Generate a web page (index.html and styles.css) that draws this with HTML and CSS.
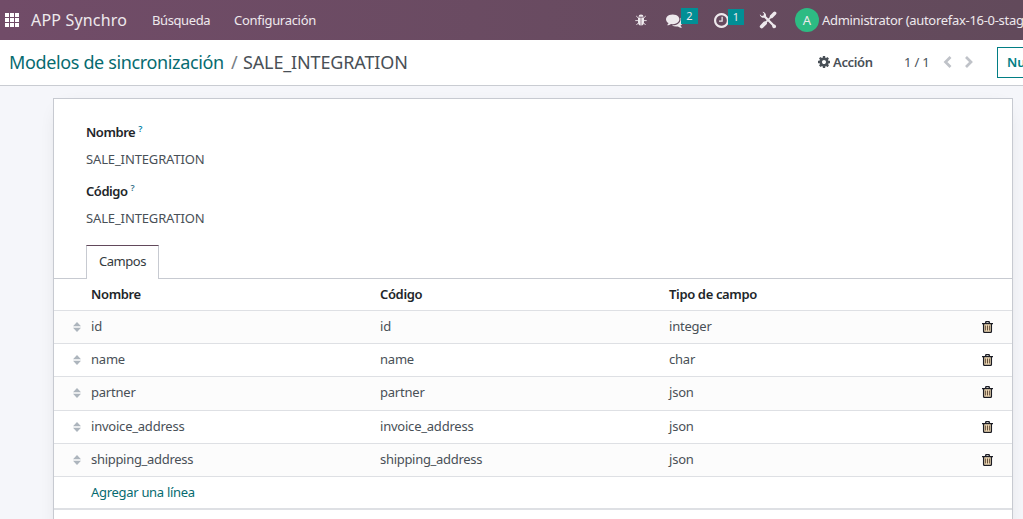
FILE: index.html
```html
<!DOCTYPE html>
<html lang="es">
<head>
<meta charset="utf-8">
<title>SALE_INTEGRATION</title>
<link rel="stylesheet" href="styles.css">
</head>
<body>
<svg class="defs" width="0" height="0">
  <symbol id="sort" viewBox="0 0 8 10"><path d="M4 0 8 4.200H0zM0 5.800H8L4 10z"/></symbol>
  <symbol id="trash" viewBox="0 0 11 12"><path fill="#f5dfb8" d="M2 3h7v8H2z"/><path fill="none" stroke="#1b1c24" stroke-width="1.300" d="M0 2.600H11M3.400 2.500 4 .7H7L7.600 2.500M1.600 2.600V10.500Q1.600 11.400 2.500 11.400H8.500Q9.400 11.400 9.400 10.500V2.600"/><path d="M3.600 4.500V9.500M5.500 4.500V9.500M7.400 4.500V9.500" stroke="#66513f" stroke-width="1"/></symbol>
</svg>
<header class="navbar">
  <svg class="apps" viewBox="0 0 14 14"><path d="M0 0h4v4H0zM5 0h4v4H5zM10 0h4v4h-4zM0 5h4v4H0zM5 5h4v4H5zM10 5h4v4h-4zM0 10h4v4H0zM5 10h4v4H5zM10 10h4v4h-4z"/></svg>
  <span class="brand">APP Synchro</span>
  <span class="menu search">Búsqueda</span>
  <span class="menu config">Configuración</span>
  <div class="systray">
    <svg class="bug" viewBox="0 0 12 12"><path d="M3.500 2.800a2.500 2.400 0 0 1 5 0zM3 3.500h2.700v8Q3 11.200 3 8zM6.300 3.500H9V8q0 3.200-2.700 3.500z"/><path fill="none" stroke="currentColor" stroke-width=".9" d="M1.200 2 3.300 4M10.800 2 8.700 4M.3 6.600H3M11.700 6.600H9M1.400 11 3.300 9M10.600 11 8.700 9"/></svg>
    <span class="tray-item messages"><svg viewBox="0 0 1792 1792"><path d="M1408 768q0 139-94 257t-256.500 186.500-353.500 68.500q-86 0-176-16-124 88-278 128-36 9-86 16h-3q-11 0-20.500-8t-11.500-21q-1-3-1-6.500t.5-6.500 2-6l2.500-5 3.500-5.500 4-5 4.500-5 4-4.500q5-6 23-25t26-29.500 22.500-29 25-38.500 20.500-44q-124-72-195-177t-71-224q0-139 94-257t256.500-186.500 353.500-68.500 353.500 68.500 256.500 186.500 94 257zm384 256q0 120-71 224.500t-195 176.500q10 24 20.500 44t25 38.500 22.500 29 26 29.500 23 25q1 1 4 4.500t4.500 5 4 5 3.500 5.500l2.500 5 2 6 .5 6.500-1 6.500q-3 14-13 22t-22 7q-50-7-86-16-154-40-278-128-90 16-176 16-271 0-472-132 58 4 88 4 161 0 309-45t264-129q125-92 192-212t67-254q0-77-23-152 129 71 204 178t75 230z"/></svg><b class="badge">2</b></span>
    <span class="tray-item activities"><svg viewBox="128 128 1536 1536"><path d="M1024 544v448q0 14-9 23t-23 9h-320q-14 0-23-9t-9-23v-64q0-14 9-23t23-9h224v-352q0-14 9-23t23-9h64q14 0 23 9t9 23zm416 352q0-148-73-273t-198-198-273-73-273 73-198 198-73 273 73 273 198 198 273 73 273-73 198-198 73-273zm224 0q0 209-103 385.500t-279.500 279.500-385.500 103-385.500-103-279.500-279.500-103-385.500 103-385.500 279.500-279.500 385.500-103 385.500 103 279.500 279.500 103 385.500z"/></svg><b class="badge">1</b></span>
    <svg class="tools" viewBox="0 0 18 18"><path d="M.8 3.200A3.800 3.800 0 0 0 5.300 6.800L13 14.600Q13 16.700 14.600 17.200 16 17.400 17 16.200 17.600 14 14.900 13.300L7 5.300A3.800 3.800 0 0 0 3.300.8L5 2.500 4.600 4.400 2.700 4.900z"/><path fill="none" stroke="currentColor" stroke-linecap="round" d="M2.700 15.500 6 12.200" stroke-width="3.800"/><path fill="none" stroke="currentColor" d="M6 12.200 12 6" stroke-width="1.700"/><path fill="none" stroke="currentColor" stroke-linecap="round" d="M12.500 5.500 15.700 2.200" stroke-width="3.400"/></svg>
    <span class="avatar">A</span>
    <span class="user">Administrator (autorefax-16-0-staging)</span>
  </div>
</header>
<section class="control">
  <div class="crumbs"><a>Modelos de sincronización</a><i>/</i><span>SALE_INTEGRATION</span></div>
  <div class="action"><svg viewBox="128 128 1536 1536"><path d="M1152 896q0-106-75-181t-181-75-181 75-75 181 75 181 181 75 181-75 75-181zm512-109v222q0 12-8 23t-20 13l-185 28q-19 54-39 91 35 50 107 138 10 12 10 25t-9 23q-27 37-99 108t-94 71q-12 0-26-9l-138-108q-44 23-91 38-16 136-29 186-7 28-36 28h-222q-14 0-24.500-8.500t-11.500-21.500l-28-184q-49-16-90-37l-141 107q-10 9-25 9-14 0-25-11-126-114-165-168-7-10-7-23 0-12 8-23 15-21 51-66.500t54-70.500q-27-50-41-99l-183-27q-13-2-21-12.500t-8-23.500v-222q0-12 8-23t19-13l186-28q14-46 39-92-40-57-107-138-10-12-10-24 0-10 9-23 26-36 98.500-107.500t94.500-71.500q13 0 26 10l138 107q44-23 91-38 16-136 29-186 7-28 36-28h222q14 0 24.500 8.500t11.500 21.500l28 184q49 16 90 37l142-107q9-9 24-9 13 0 25 10 129 119 165 170 7 8 7 22 0 12-8 23-15 21-51 66.500t-54 70.500q26 50 41 98l183 28q13 2 21 12.500t8 23.500z"/></svg><b>Acción</b></div>
  <span class="pager">1 / 1</span>
  <svg class="arrows" viewBox="0 0 30 12"><path d="M7.500 1 2.500 6l5 5M23 1l5 5-5 5"/></svg>
  <button class="new">Nuevo</button>
</section>
<main class="sheet">
  <div class="fields">
    <label class="name">Nombre<sup>?</sup></label><p>SALE_INTEGRATION</p>
    <label class="code">Código<sup class="dark">?</sup></label><p>SALE_INTEGRATION</p>
  </div>
  <div class="tabs"><span class="tab">Campos</span></div>
  <div class="row head"><span></span><b class="h-name">Nombre</b><b class="h-code">Código</b><b class="h-type">Tipo de campo</b></div>
  <div class="row odd"><svg class="handle"><use href="#sort"/></svg><span>id</span><span>id</span><span>integer</span><svg class="trash"><use href="#trash"/></svg></div>
  <div class="row"><svg class="handle"><use href="#sort"/></svg><span>name</span><span>name</span><span>char</span><svg class="trash"><use href="#trash"/></svg></div>
  <div class="row odd tall"><svg class="handle"><use href="#sort"/></svg><span>partner</span><span>partner</span><span>json</span><svg class="trash"><use href="#trash"/></svg></div>
  <div class="row"><svg class="handle"><use href="#sort"/></svg><span>invoice_address</span><span>invoice_address</span><span>json</span><svg class="trash"><use href="#trash"/></svg></div>
  <div class="row odd"><svg class="handle"><use href="#sort"/></svg><span class="ship">shipping_address</span><span class="ship">shipping_address</span><span>json</span><svg class="trash"><use href="#trash"/></svg></div>
  <div class="row add"><span></span><a>Agregar una línea</a></div>
</main>
</body>
</html>
```

FILE: styles.css
```css
* { box-sizing: border-box; }
body { margin: 0; height: 519px; overflow: hidden; background: #f5f6fa; color: #495057; font: 13px/20px "Noto Sans", "Open Sans", sans-serif; white-space: nowrap; }
svg { display: block; flex: none; fill: currentColor; }
.defs { position: absolute; }
a { color: #066b70; }
.navbar { height: 40px; display: flex; align-items: center; padding-left: 5px; color: #eee9ed; background: linear-gradient(90deg, #714c68, #624a5b); }
.apps { width: 14px; height: 14px; color: #fff; }
.brand { width: 121px; margin-left: 12px; font-size: 16px; letter-spacing: .18px; }
.search { width: 82px; margin-left: 0; }
.menu { font-size: 13px; letter-spacing: -.3px; }
.search { letter-spacing: -.4px; }
.systray { margin-left: auto; width: 388px; flex: none; display: flex; align-items: center; height: 40px; }
.bug { width: 12px; height: 12px; }
.tray-item { position: relative; display: flex; flex: none; }
.messages { margin-left: 19px; width: 47px; }
.messages svg { width: 17px; height: 17px; }
.activities { width: 46px; }
.activities svg { width: 15px; height: 15px; margin-left: 1px; }
.badge { position: absolute; left: 15px; top: -4px; width: 17px; height: 16px; background: #018f95; font: 11px/16px "Noto Sans", sans-serif; text-align: center; }
.activities .badge { left: 15px; top: -4px; width: 16px; }
.tools { width: 18px; height: 18px; }
.avatar { flex: none; width: 24px; height: 24px; margin-left: 18px; border-radius: 50%; background: #2dbb83; text-align: center; line-height: 24px; }
.user { margin-left: 3px; letter-spacing: -.3px; }
.control { height: 46px; border-bottom: 1px solid #c9ccd2; background: #fff; display: flex; align-items: center; overflow: hidden; padding: 0 0 1px 9px; }
.crumbs { width: 809px; flex: none; font-size: 18px; display: flex; }
.crumbs a { width: 222px; letter-spacing: -.36px; }
.crumbs i { width: 12px; font-style: normal; color: #777d84; }
.crumbs span { letter-spacing: -.14px; }
.action { width: 86px; flex: none; display: flex; align-items: center; gap: 3px; }
.action svg { width: 12px; height: 12px; }
.action b { font-weight: 600; letter-spacing: -.35px; }
.pager { width: 37px; flex: none; letter-spacing: -.2px; }
.arrows { width: 30px; height: 12px; margin-left: 2px; }
.arrows path { fill: none; stroke: #bfc2c8; stroke-width: 2.700; }
.new { margin-left: 24px; width: 64px; height: 31px; flex: none; padding: 0 0 0 9px; text-align: left; border: 1px solid #017e84; background: #fff; color: #017e84; font: 600 13px "Noto Sans", sans-serif; }
.sheet { width: 960px; height: 440px; margin: 12px 0 0 53px; background: #fff; border: 1px solid #c7cad1; box-shadow: 0 5px 20px -10px #0003; }
.fields { height: 146px; padding: 23px 0 0 32px; }
label { display: block; height: 20px; font-weight: 600; color: #212529; letter-spacing: -.45px; }
.fields p { margin: 7px 0 12px; letter-spacing: -.13px; height: 20px; }
sup { margin-left: 3px; font-size: 9px; line-height: 0; vertical-align: 5px; color: #0180a5; font-weight: 600; }
.dark { color: #35708a; }
.tabs { height: 34px; border-bottom: 1px solid #c7cad1; padding-left: 32px; }
.tab { display: block; width: 73px; height: 34px; padding: 5px 0 0 12px; border: 1px solid #c7cad1; border-top-color: #62495b; border-bottom: 0; background: #fff; color: #343a40; letter-spacing: -.45px; }
.row { display: grid; grid-template-columns: 37px 289px 289px 313px 12px; height: 33px; align-items: center; border-bottom: 1px solid #dee0e4; letter-spacing: -.22px; }
.row span, .row b, .row a { padding-bottom: 2px; }
.row .ship { letter-spacing: -.3px; }
.head { height: 32px; color: #212529; }
.head b { font-weight: 600; letter-spacing: -.35px; }
.odd { background: #fcfcfc; }
.tall { height: 34px; }
.tall span { padding-bottom: 3px; }
.tall svg { margin-bottom: 1px; }
.handle { width: 8px; height: 10px; margin-left: 19px; color: #adb5bd; }
.trash { width: 11px; height: 12px; margin-bottom: 1px; }
.tall .trash { margin-bottom: 3px; }
.add { border-bottom: 2px solid #dee0e4; letter-spacing: -.3px; }
```
